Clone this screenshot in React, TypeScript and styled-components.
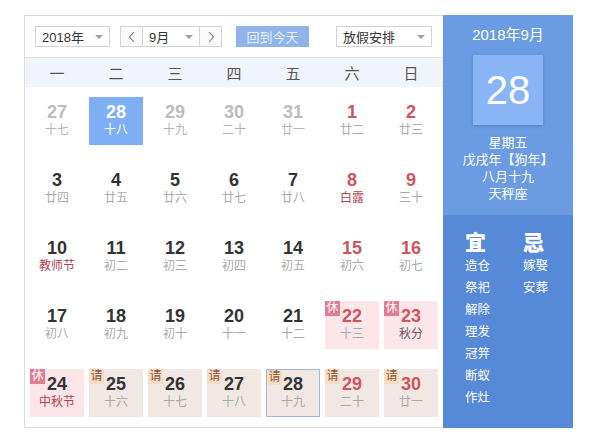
import React from "react"
import styled, { createGlobalStyle, css } from "styled-components"

const GlobalStyle = createGlobalStyle`
  html, body {
    margin: 0;
    padding: 0;
    background: #ffffff;
  }
  body {
    font-family: "Liberation Sans", "Noto Sans CJK SC", sans-serif;
  }
`

const CJK = `"Liberation Sans", "Noto Sans CJK SC", sans-serif`

const Calendar = styled.div`
  display: flex;
  margin: 15px 0 0 24px;
  width: 549px;
  height: 413px;
`

const MainPanel = styled.div`
  width: 419px;
  box-sizing: border-box;
  border: 1px solid #dcdcdc;
  border-right: none;
  display: flex;
  flex-direction: column;
  background: #fff;
`

const Toolbar = styled.div`
  height: 42px;
  box-sizing: border-box;
  border-bottom: 1px solid #e3e3e3;
  display: flex;
  align-items: flex-start;
  padding: 10px 0 0 10px;
`

const Select = styled.div<{ w: number; ml?: number }>`
  width: ${({ w }) => w}px;
  margin-left: ${({ ml }) => ml ?? 0}px;
  height: 21px;
  box-sizing: border-box;
  border: 1px solid #d4d4d4;
  display: flex;
  align-items: center;
  justify-content: space-between;
  padding: 0 6px 0 6px;
  font-family: ${CJK};
  font-size: 13px;
  color: #333;
  background: #fff;
`

const Caret = styled.span`
  width: 0;
  height: 0;
  border-left: 4px solid transparent;
  border-right: 4px solid transparent;
  border-top: 4px solid #a0a0a0;
`

const MonthGroup = styled.div`
  display: flex;
  margin-left: 10px;
`

const StepButton = styled.div<{ side: "l" | "r" }>`
  width: 22px;
  height: 21px;
  box-sizing: border-box;
  border: 1px solid #d4d4d4;
  ${({ side }) =>
    side === "l"
      ? css`
          border-right: none;
        `
      : css`
          border-left: none;
        `}
  display: flex;
  align-items: center;
  justify-content: center;
  background: #fafafa;
`

const TodayButton = styled.div`
  margin-left: 14px;
  width: 73px;
  height: 21px;
  background: #8fb4ea;
  color: #e8f0fc;
  font-family: ${CJK};
  font-size: 13px;
  display: flex;
  align-items: center;
  justify-content: center;
`

const WeekHeader = styled.div`
  height: 29px;
  background: #f1f4fa;
  display: grid;
  grid-template-columns: repeat(7, 59px);
  padding: 0 2.5px;
  align-items: center;
`

const WeekLabel = styled.div`
  text-align: center;
  font-family: "Noto Sans CJK SC", serif;
  font-size: 15px;
  color: #555;
`

const Grid = styled.div`
  display: grid;
  grid-template-columns: repeat(7, 59px);
  grid-auto-rows: 68px;
  padding: 0 2.5px;
`

type Kind = "normal" | "other" | "selected" | "rest" | "work"

const Cell = styled.div<{ kind: Kind; today?: boolean }>`
  position: relative;
  margin: 10px 2.5px;
  height: 48px;
  box-sizing: border-box;
  display: flex;
  flex-direction: column;
  align-items: center;
  padding-top: 5px;
  ${({ kind }) => kind === "selected" && css`background: #7eaff5;`}
  ${({ kind }) => kind === "rest" && css`background: #fde6ea;`}
  ${({ kind }) => kind === "work" && css`background: #f1e8e3;`}
  ${({ today }) =>
    today &&
    css`
      border: 1px solid #9fb6d8;
      padding-top: 4px;
    `}
`

const DayNum = styled.div<{ tone: string }>`
  font-family: "Liberation Sans", Arial, sans-serif;
  font-weight: bold;
  font-size: 18px;
  line-height: 20px;
  color: ${({ tone }) => tone};
`

const Lunar = styled.div<{ tone: string }>`
  font-family: ${CJK};
  font-size: 12px;
  line-height: 16px;
  color: ${({ tone }) => tone};
`

const Badge = styled.span<{ rest: boolean }>`
  position: absolute;
  top: 0;
  left: 0;
  width: 15px;
  height: 15px;
  font-family: ${CJK};
  font-size: 12px;
  line-height: 15px;
  text-align: center;
  ${({ rest }) =>
    rest
      ? css`
          background: #e07d92;
          color: #fff;
        `
      : css`
          background: #f8dcc6;
          color: #8a5638;
        `}
`

const SidePanel = styled.div`
  width: 130px;
  display: flex;
  flex-direction: column;
  color: #fff;
  font-family: ${CJK};
`

const SideTop = styled.div`
  height: 200px;
  background: #6b9be2;
  display: flex;
  flex-direction: column;
  align-items: center;
`

const MonthTitle = styled.div`
  margin-top: 11px;
  font-size: 15px;
  line-height: 18px;
`

const BigDay = styled.div`
  margin-top: 11px;
  width: 70px;
  height: 70px;
  background: #89b5f6;
  box-shadow: 0 1px 3px rgba(40, 80, 150, 0.35);
  display: flex;
  align-items: center;
  justify-content: center;
  font-family: "Liberation Sans", Arial, sans-serif;
  font-size: 40px;
`

const InfoLines = styled.div`
  margin-top: 9px;
  font-size: 13px;
  line-height: 17px;
  text-align: center;
`

const SideBottom = styled.div`
  flex: 1;
  background: #5789d9;
  display: flex;
  padding: 14px 0 0 22px;
  gap: 32px;
`

const AdviceCol = styled.div`
  display: flex;
  flex-direction: column;
  width: 26px;
`

const AdviceHead = styled.div`
  font-family: "Noto Sans CJK SC", serif;
  font-weight: 900;
  font-size: 21px;
  line-height: 24px;
  margin-bottom: 2px;
`

const AdviceItem = styled.div`
  font-size: 12.5px;
  line-height: 22px;
  white-space: nowrap;
`

type Day = {
  n: number
  l: string
  kind?: Kind
  red?: boolean
  fest?: boolean
  dark?: boolean
  badge?: "休" | "请"
  today?: boolean
}

const days: Day[] = [
  { n: 27, l: "十七", kind: "other" },
  { n: 28, l: "十八", kind: "selected" },
  { n: 29, l: "十九", kind: "other" },
  { n: 30, l: "二十", kind: "other" },
  { n: 31, l: "廿一", kind: "other" },
  { n: 1, l: "廿二", red: true },
  { n: 2, l: "廿三", red: true },
  { n: 3, l: "廿四" },
  { n: 4, l: "廿五" },
  { n: 5, l: "廿六" },
  { n: 6, l: "廿七" },
  { n: 7, l: "廿八" },
  { n: 8, l: "白露", red: true, fest: true },
  { n: 9, l: "三十", red: true },
  { n: 10, l: "教师节", fest: true },
  { n: 11, l: "初二" },
  { n: 12, l: "初三" },
  { n: 13, l: "初四" },
  { n: 14, l: "初五" },
  { n: 15, l: "初六", red: true },
  { n: 16, l: "初七", red: true },
  { n: 17, l: "初八" },
  { n: 18, l: "初九" },
  { n: 19, l: "初十" },
  { n: 20, l: "十一" },
  { n: 21, l: "十二" },
  { n: 22, l: "十三", red: true, kind: "rest", badge: "休" },
  { n: 23, l: "秋分", red: true, dark: true, kind: "rest", badge: "休" },
  { n: 24, l: "中秋节", fest: true, kind: "rest", badge: "休" },
  { n: 25, l: "十六", kind: "work", badge: "请" },
  { n: 26, l: "十七", kind: "work", badge: "请" },
  { n: 27, l: "十八", kind: "work", badge: "请" },
  { n: 28, l: "十九", kind: "work", badge: "请", today: true },
  { n: 29, l: "二十", red: true, kind: "work", badge: "请" },
  { n: 30, l: "廿一", red: true, kind: "work", badge: "请" },
]

const weekdays = ["一", "二", "三", "四", "五", "六", "日"]
const good = ["造仓", "祭祀", "解除", "理发", "冠笄", "断蚁", "作灶"]
const bad = ["嫁娶", "安葬"]

const numTone = (d: Day) => {
  if (d.kind === "selected") return "#ffffff"
  if (d.kind === "other") return "#bbbbbb"
  if (d.red) return "#d0545d"
  return "#333333"
}

const lunarTone = (d: Day) => {
  if (d.kind === "selected") return "#ffffff"
  if (d.kind === "other") return "#b5b5b5"
  if (d.dark) return "#6a5a5a"
  if (d.fest) return "#b3424e"
  return "#aaaaaa"
}

const Chevron = ({ dir }: { dir: "l" | "r" }) => (
  <svg width="8" height="12" viewBox="0 0 8 12">
    <path
      d={dir === "l" ? "M6 1 L1.5 6 L6 11" : "M2 1 L6.5 6 L2 11"}
      fill="none"
      stroke="#777"
      strokeWidth="1.1"
    />
  </svg>
)

export default function App() {
  return (
    <>
      <GlobalStyle />
      <Calendar>
        <MainPanel>
          <Toolbar>
            <Select w={75}>
              <span>2018年</span>
              <Caret />
            </Select>
            <MonthGroup>
              <StepButton side="l">
                <Chevron dir="l" />
              </StepButton>
              <Select w={58}>
                <span>9月</span>
                <Caret />
              </Select>
              <StepButton side="r">
                <Chevron dir="r" />
              </StepButton>
            </MonthGroup>
            <TodayButton>回到今天</TodayButton>
            <Select w={96} ml={27}>
              <span>放假安排</span>
              <Caret />
            </Select>
          </Toolbar>
          <WeekHeader>
            {weekdays.map((w) => (
              <WeekLabel key={w}>{w}</WeekLabel>
            ))}
          </WeekHeader>
          <Grid>
            {days.map((d, i) => (
              <Cell key={i} kind={d.kind ?? "normal"} today={d.today}>
                {d.badge && <Badge rest={d.badge === "休"}>{d.badge}</Badge>}
                <DayNum tone={numTone(d)}>{d.n}</DayNum>
                <Lunar tone={lunarTone(d)}>{d.l}</Lunar>
              </Cell>
            ))}
          </Grid>
        </MainPanel>
        <SidePanel>
          <SideTop>
            <MonthTitle>2018年9月</MonthTitle>
            <BigDay>28</BigDay>
            <InfoLines>
              <div>星期五</div>
              <div>戊戌年【狗年】</div>
              <div>八月十九</div>
              <div>天秤座</div>
            </InfoLines>
          </SideTop>
          <SideBottom>
            <AdviceCol>
              <AdviceHead>宜</AdviceHead>
              {good.map((g) => (
                <AdviceItem key={g}>{g}</AdviceItem>
              ))}
            </AdviceCol>
            <AdviceCol>
              <AdviceHead>忌</AdviceHead>
              {bad.map((b) => (
                <AdviceItem key={b}>{b}</AdviceItem>
              ))}
            </AdviceCol>
          </SideBottom>
        </SidePanel>
      </Calendar>
    </>
  )
}
